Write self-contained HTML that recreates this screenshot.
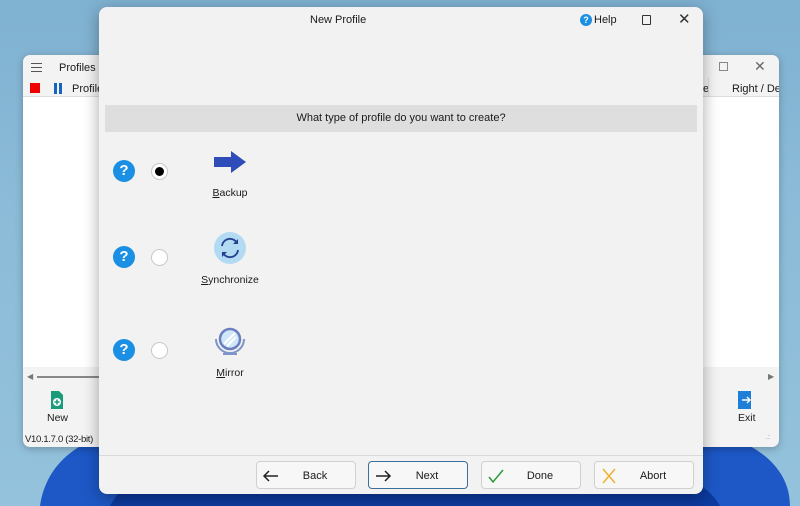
<!DOCTYPE html>
<html><head><meta charset="utf-8"><style>
*{margin:0;padding:0;box-sizing:border-box}
body{width:800px;height:506px;overflow:hidden;position:relative;font-family:"Liberation Sans",sans-serif;font-size:11px;color:#1a1a1a;background:linear-gradient(180deg,#7fb1d1 0%,#8bbbd8 40%,#94c2dc 100%)}
.abs{position:absolute;white-space:nowrap}
.win2{left:23px;top:55px;width:756px;height:392px;background:#f3f3f3;border-radius:7px;box-shadow:0 2px 8px rgba(0,0,0,.25);overflow:hidden}
.dlg{left:99px;top:7px;width:604px;height:487px;background:#f2f2f2;border-radius:8px;box-shadow:0 4px 16px rgba(0,0,0,.35);overflow:hidden}
.q{width:22px;height:22px;border-radius:50%;background:#1a8fe3;color:#fff;font-weight:bold;font-size:15px;text-align:center;line-height:22px}
.r{width:17px;height:17px;border-radius:50%;background:#fff;border:1px solid #c8c8c8}
.btn{top:454px;width:100px;height:28px;background:#f7f7f7;border:1px solid #d0d0d0;border-radius:4px;font-size:11px}
.btn span{position:absolute;left:0;right:0;text-align:center;top:8px;padding-left:18px}
.btn svg{position:absolute;left:5px;top:5px}
.lbl{font-size:10.5px;text-align:center;width:100px}
</style></head><body>
<svg class="abs" style="left:0;top:0" width="800" height="506">
<path d="M40 506 C50 440 120 420 200 430 L700 430 C760 440 790 470 790 506 Z" fill="#1d58c6"/>
<path d="M110 506 C130 470 170 455 250 460 L560 470 C640 460 700 470 720 506 Z" fill="#0c3aa0"/>
</svg>
<div class="abs win2">
 <div class="abs" style="left:8px;top:7px;width:11px">
  <div style="height:1px;background:#555;margin:1px 0 3px"></div><div style="height:1px;background:#555;margin-bottom:3px"></div><div style="height:1px;background:#555"></div></div>
 <div class="abs" style="left:36px;top:7px;font-size:11px">Profiles</div>
 <div class="abs" style="left:7px;top:28px;width:10px;height:10px;background:#e00"></div>
 <div class="abs" style="left:31px;top:28px;width:3px;height:11px;background:#1565c0"></div>
 <div class="abs" style="left:36px;top:28px;width:3px;height:11px;background:#1565c0"></div>
 <div class="abs" style="left:49px;top:28px;font-size:11px">Profile</div>
 <div class="abs" style="left:0;top:41px;width:756px;height:1px;background:#ddd"></div>
 <div class="abs" style="left:0;top:42px;width:756px;height:270px;background:#fff"></div>
 <div class="abs" style="left:696px;top:7px;width:9px;height:9px;border:1px solid #888"></div>
 <div class="abs" style="left:731px;top:3px;font-size:14px;color:#666">✕</div>
 <div class="abs" style="left:680px;top:28px;font-size:11px">e</div>
 <div class="abs" style="left:685px;top:22px;width:1px;height:19px;background:#ddd"></div>
 <div class="abs" style="left:709px;top:28px;font-size:11px">Right / Des</div>
 <div class="abs" style="left:4px;top:317px;font-size:8px;color:#777">◀</div>
 <div class="abs" style="left:14px;top:321px;width:62px;height:2px;background:#888"></div>
 <div class="abs" style="left:745px;top:317px;font-size:8px;color:#777">▶</div>
 <svg class="abs" style="left:27px;top:335px" width="14" height="20"><path d="M1 1h8l4 4v14H1z" fill="#1a9c7a"/><circle cx="7" cy="12" r="4" fill="#fff"/><path d="M7 9.5v5M4.5 12h5" stroke="#1a9c7a" stroke-width="1.6"/></svg>
 <div class="abs" style="left:24px;top:357px;font-size:10.5px">New</div>
 <svg class="abs" style="left:714px;top:335px" width="16" height="20"><rect x="1" y="1" width="13" height="18" fill="#1f7fd6"/><path d="M5 10h8M10 7l3 3-3 3" stroke="#fff" stroke-width="1.4" fill="none"/></svg>
 <div class="abs" style="left:715px;top:357px;font-size:10.5px">Exit</div>
 <div class="abs" style="left:2px;top:379px;font-size:9.5px;letter-spacing:-0.3px">V10.1.7.0 (32-bit)</div>
 <div class="abs" style="left:743px;top:379px;font-size:7px;color:#888">.:</div>
</div>
<div class="abs dlg">
 <div class="abs" style="left:211px;top:7px;font-size:11px">New Profile</div>
 <div class="abs q" style="left:481px;top:7px;width:12px;height:12px;font-size:9px;line-height:12px">?</div>
 <div class="abs" style="left:495px;top:7px;font-size:11px">Help</div>
 <div class="abs" style="left:543px;top:8px;width:9px;height:10px;border:1.3px solid #333;border-radius:1px"></div>
 <div class="abs" style="left:579px;top:3px;font-size:15px;color:#333">✕</div>
 <div class="abs" style="left:6px;top:98px;width:592px;height:27px;background:#dedede;text-align:center;line-height:27px;font-size:11px">What type of profile do you want to create?</div>
 <div class="abs q" style="left:14px;top:153px">?</div>
 <div class="abs r" style="left:52px;top:156px"><div style="width:9px;height:9px;border-radius:50%;background:#000;margin:3px"></div></div>
 <svg class="abs" style="left:114px;top:143px" width="34" height="24"><path d="M1 7h17V1l15 11-15 11v-6H1z" fill="#2e4db8"/></svg>
 <div class="abs lbl" style="left:81px;top:180px"><u>B</u>ackup</div>
 <div class="abs q" style="left:14px;top:239px">?</div>
 <div class="abs r" style="left:52px;top:242px"></div>
 <svg class="abs" style="left:114px;top:224px" width="34" height="34"><circle cx="17" cy="17" r="16" fill="#b3daf3"/><path d="M9 15a8 8 0 0 1 15-3" stroke="#23408f" stroke-width="1.8" fill="none"/><path d="M25 8v5h-5" fill="#23408f"/><path d="M25 19a8 8 0 0 1-15 3" stroke="#23408f" stroke-width="1.8" fill="none"/><path d="M9 26v-5h5" fill="#23408f"/></svg>
 <div class="abs lbl" style="left:81px;top:267px"><u>S</u>ynchronize</div>
 <div class="abs q" style="left:14px;top:332px">?</div>
 <div class="abs r" style="left:52px;top:335px"></div>
 <svg class="abs" style="left:114px;top:318px" width="34" height="32"><path d="M3 14a14 14 0 0 0 28 0" stroke="#7d95c9" stroke-width="2" fill="none"/><circle cx="17" cy="14" r="10" fill="#cfe7f7" stroke="#6b7fc0" stroke-width="2.5"/><path d="M11 19l11-11M14 21l9-9" stroke="#fff" stroke-width="2"/><path d="M10 29h14" stroke="#7d95c9" stroke-width="2"/></svg>
 <div class="abs lbl" style="left:81px;top:360px"><u>M</u>irror</div>
 <div class="abs" style="left:0;top:448px;width:604px;height:1px;background:#dadada"></div>
 <div class="abs btn" style="left:157px"><svg width="18" height="18"><path d="M16 9H2M7 4L2 9l5 5" stroke="#222" stroke-width="1.5" fill="none"/></svg><span>Back</span></div>
 <div class="abs btn" style="left:269px;border-color:#3b6e9a"><svg width="18" height="18"><path d="M2 9h14M11 4l5 5-5 5" stroke="#222" stroke-width="1.5" fill="none"/></svg><span>Next</span></div>
 <div class="abs btn" style="left:382px"><svg width="18" height="18"><path d="M2 10l4 5 10-12" stroke="#2a9a3a" stroke-width="1.5" fill="none"/></svg><span>Done</span></div>
 <div class="abs btn" style="left:495px"><svg width="18" height="18"><path d="M3 2l12 14M15 2L3 16" stroke="#f0b030" stroke-width="1.5" fill="none"/></svg><span>Abort</span></div>
</div>
</body></html>
